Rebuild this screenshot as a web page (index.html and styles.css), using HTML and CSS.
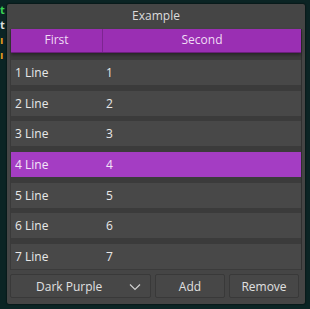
FILE: index.html
```html
<!DOCTYPE html>
<html lang="en">
<head>
  <meta charset="UTF-8">
  <title>Example</title>
  <link rel="stylesheet" href="styles.css">
</head>
<body>
  <!-- background terminal scraps -->
  <div class="backdrop">
    <span class="g">t</span>
    <span class="w">t</span>
    <span class="o">ı</span>
    <span class="o">ı</span>
  </div>

  <div class="window">
    <div class="title">Example</div>

    <!-- Table -->
    <div class="table">
      <div class="head">
        <div class="hcell">First</div>
        <div class="hcell">Second</div>
      </div>
      <div class="row"><span>1 Line</span><span>1</span></div>
      <div class="row"><span>2 Line</span><span>2</span></div>
      <div class="row"><span>3 Line</span><span>3</span></div>
      <div class="row selected"><span>4 Line</span><span>4</span></div>
      <div class="row"><span>5 Line</span><span>5</span></div>
      <div class="row"><span>6 Line</span><span>6</span></div>
      <div class="row"><span>7 Line</span><span>7</span></div>
    </div>

    <!-- Buttons -->
    <div class="buttons">
      <div class="btn combo">
        <span>Dark Purple</span>
        <svg width="12" height="8" viewBox="0 0 12 8"><path d="M1 1.5 L6 6.5 L11 1.5" fill="none" stroke="#cfcfcf" stroke-width="1.2"/></svg>
      </div>
      <div class="btn">Add</div>
      <div class="btn">Remove</div>
    </div>
  </div>
</body>
</html>
```

FILE: styles.css
```css
body {
  margin: 0;
  background: #0b2424;
  font-family: "Open Sans", "Noto Sans", sans-serif;
  font-size: 12px;
  color: #e2e2e2;
  position: relative;
  height: 309px;
  overflow: hidden;
}
.backdrop {
  position: absolute;
  left: 0;
  top: 3px;
  display: flex;
  flex-direction: column;
  gap: 2px;
  font-size: 11px;
  line-height: 13px;
  font-weight: bold;
}
.backdrop .g { color: #39d353; }
.backdrop .w { color: #dddddd; }
.backdrop .o { color: #e69a1c; }
.window {
  position: absolute;
  left: 7px;
  top: 4px;
  width: 298px;
  height: 300px;
  background: #454545;
  border-radius: 2px;
  box-shadow: 0 0 2px #000;
}
.title {
  height: 25px;
  line-height: 24px;
  text-align: center;
  color: #dcdcdc;
}
.table {
  margin: 0 3px;
  height: 241px;
  background: #3b3b3b;
  border-right: 1px solid #2f2f2f;
  border-left: 1px solid #3a3a3a;
}
.head {
  display: grid;
  grid-template-columns: 91px 1fr;
  height: 23px;
  background: #9a2fb3;
  border-bottom: 1px solid #6b1f7c;
  box-shadow: 0 2px 3px rgba(0, 0, 0, 0.35);
  color: #f0dcf5;
}
.hcell {
  text-align: center;
  line-height: 22px;
}
.hcell + .hcell {
  border-left: 1px solid #7d2591;
}
.row {
  display: grid;
  grid-template-columns: 91px 1fr;
  height: 25px;
  margin-top: 5.7px;
  background: #484848;
  line-height: 25px;
  color: #e8e8e8;
}
.head + .row {
  margin-top: 7px;
}
.row span:first-child {
  padding-left: 4px;
}
.row span:last-child {
  padding-left: 4px;
}
.row.selected {
  background: #a43dc3;
  color: #f4e6f8;
}
.buttons {
  display: flex;
  gap: 4px;
  margin: 4px 4px 0 3px;
}
.btn {
  flex: 70px 0 0;
  height: 24px;
  line-height: 23px;
  text-align: center;
  background: #474747;
  border: 1px solid #393939;
  border-radius: 2px;
  box-sizing: border-box;
  color: #e0e0e0;
}
.btn.combo {
  flex: 141px 0 0;
  display: flex;
  align-items: center;
  justify-content: space-between;
  padding: 0 9px 0 25px;
}
.btn.combo svg {
  margin-top: 1px;
}
```
